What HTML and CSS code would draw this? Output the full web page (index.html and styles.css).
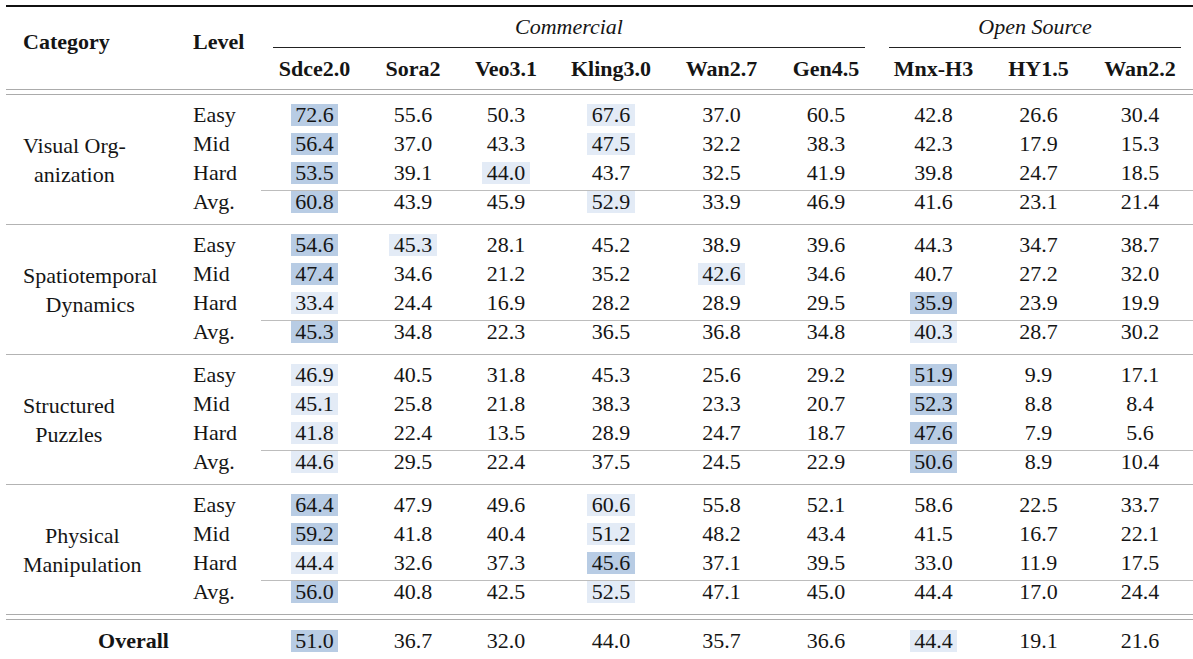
FILE: index.html
```html
<!DOCTYPE html>
<html lang="en">
<head>
<meta charset="utf-8">
<title>Results table</title>
<link rel="stylesheet" href="styles.css">
</head>
<body>
<div class="grid">
  <div class="row h1">
    <div class="hleft hb">Category</div>
    <div class="hleft hb">Level</div>
    <div class="grp g6">Commercial</div>
    <div class="grp g3">Open Source</div>
  </div>
  <div class="row h2">
    <div class="hb">Sdce2.0</div><div class="hb">Sora2</div><div class="hb">Veo3.1</div><div class="hb">Kling3.0</div><div class="hb">Wan2.7</div><div class="hb">Gen4.5</div>
    <div class="hb">Mnx-H3</div><div class="hb">HY1.5</div><div class="hb">Wan2.2</div>
  </div>

  <div class="row first">
    <div class="cat"><span class="cat-in">Visual Org-<br>anization</span></div>
    <div class="lvl">Easy</div>
    <div><span class="hl d">72.6</span></div><div>55.6</div><div>50.3</div><div><span class="hl l">67.6</span></div><div>37.0</div><div>60.5</div><div>42.8</div><div>26.6</div><div>30.4</div>
  </div>
  <div class="row">
    <div class="lvl">Mid</div>
    <div><span class="hl d">56.4</span></div><div>37.0</div><div>43.3</div><div><span class="hl l">47.5</span></div><div>32.2</div><div>38.3</div><div>42.3</div><div>17.9</div><div>15.3</div>
  </div>
  <div class="row hard">
    <div class="lvl">Hard</div>
    <div><span class="hl d">53.5</span></div><div>39.1</div><div><span class="hl l">44.0</span></div><div>43.7</div><div>32.5</div><div>41.9</div><div>39.8</div><div>24.7</div><div>18.5</div>
  </div>
  <div class="row avg">
    <div class="lvl">Avg.</div>
    <div><span class="hl d">60.8</span></div><div>43.9</div><div>45.9</div><div><span class="hl l">52.9</span></div><div>33.9</div><div>46.9</div><div>41.6</div><div>23.1</div><div>21.4</div>
  </div>

  <div class="row first sep">
    <div class="cat"><span class="cat-in">Spatiotemporal<br>Dynamics</span></div>
    <div class="lvl">Easy</div>
    <div><span class="hl d">54.6</span></div><div><span class="hl l">45.3</span></div><div>28.1</div><div>45.2</div><div>38.9</div><div>39.6</div><div>44.3</div><div>34.7</div><div>38.7</div>
  </div>
  <div class="row">
    <div class="lvl">Mid</div>
    <div><span class="hl d">47.4</span></div><div>34.6</div><div>21.2</div><div>35.2</div><div><span class="hl l">42.6</span></div><div>34.6</div><div>40.7</div><div>27.2</div><div>32.0</div>
  </div>
  <div class="row hard">
    <div class="lvl">Hard</div>
    <div><span class="hl l">33.4</span></div><div>24.4</div><div>16.9</div><div>28.2</div><div>28.9</div><div>29.5</div><div><span class="hl d">35.9</span></div><div>23.9</div><div>19.9</div>
  </div>
  <div class="row avg">
    <div class="lvl">Avg.</div>
    <div><span class="hl d">45.3</span></div><div>34.8</div><div>22.3</div><div>36.5</div><div>36.8</div><div>34.8</div><div><span class="hl l">40.3</span></div><div>28.7</div><div>30.2</div>
  </div>

  <div class="row first sep">
    <div class="cat"><span class="cat-in">Structured<br>Puzzles</span></div>
    <div class="lvl">Easy</div>
    <div><span class="hl l">46.9</span></div><div>40.5</div><div>31.8</div><div>45.3</div><div>25.6</div><div>29.2</div><div><span class="hl d">51.9</span></div><div>9.9</div><div>17.1</div>
  </div>
  <div class="row">
    <div class="lvl">Mid</div>
    <div><span class="hl l">45.1</span></div><div>25.8</div><div>21.8</div><div>38.3</div><div>23.3</div><div>20.7</div><div><span class="hl d">52.3</span></div><div>8.8</div><div>8.4</div>
  </div>
  <div class="row hard">
    <div class="lvl">Hard</div>
    <div><span class="hl l">41.8</span></div><div>22.4</div><div>13.5</div><div>28.9</div><div>24.7</div><div>18.7</div><div><span class="hl d">47.6</span></div><div>7.9</div><div>5.6</div>
  </div>
  <div class="row avg">
    <div class="lvl">Avg.</div>
    <div><span class="hl l">44.6</span></div><div>29.5</div><div>22.4</div><div>37.5</div><div>24.5</div><div>22.9</div><div><span class="hl d">50.6</span></div><div>8.9</div><div>10.4</div>
  </div>

  <div class="row first sep">
    <div class="cat"><span class="cat-in">Physical<br>Manipulation</span></div>
    <div class="lvl">Easy</div>
    <div><span class="hl d">64.4</span></div><div>47.9</div><div>49.6</div><div><span class="hl l">60.6</span></div><div>55.8</div><div>52.1</div><div>58.6</div><div>22.5</div><div>33.7</div>
  </div>
  <div class="row">
    <div class="lvl">Mid</div>
    <div><span class="hl d">59.2</span></div><div>41.8</div><div>40.4</div><div><span class="hl l">51.2</span></div><div>48.2</div><div>43.4</div><div>41.5</div><div>16.7</div><div>22.1</div>
  </div>
  <div class="row hard">
    <div class="lvl">Hard</div>
    <div><span class="hl l">44.4</span></div><div>32.6</div><div>37.3</div><div><span class="hl d">45.6</span></div><div>37.1</div><div>39.5</div><div>33.0</div><div>11.9</div><div>17.5</div>
  </div>
  <div class="row avg">
    <div class="lvl">Avg.</div>
    <div><span class="hl d">56.0</span></div><div>40.8</div><div>42.5</div><div><span class="hl l">52.5</span></div><div>47.1</div><div>45.0</div><div>44.4</div><div>17.0</div><div>24.4</div>
  </div>

  <div class="row overall">
    <div class="ov">Overall</div>
    <div><span class="hl d">51.0</span></div><div>36.7</div><div>32.0</div><div>44.0</div><div>35.7</div><div>36.6</div><div><span class="hl l">44.4</span></div><div>19.1</div><div>21.6</div>
  </div>
</div>
</body>
</html>
```

FILE: styles.css
```css
html, body {
  margin: 0;
  padding: 0;
  background: #ffffff;
}

body {
  font-family: "Liberation Serif", "Times New Roman", serif;
  font-size: 22px;
  color: #151515;
}

.grid {
  display: grid;
  grid-template-columns: 170px 85px 107px 90px 96px 114px 107px 102px 113px 97px 106px;
  width: 1187px;
  margin: 5px 0 0 6px;
  border-top: 2px solid #111111;
}

.row {
  display: contents;
}

.row > div {
  line-height: 29px;
  text-align: center;
  white-space: nowrap;
}

/* header */
.h1 > .hleft {
  grid-row: span 2;
  text-align: left;
  font-weight: bold;
  padding: 20px 0 0 17px;
}

.h1 > .grp {
  margin: 0 12px;
  height: 40px;
  line-height: 40px;
  border-bottom: 1px solid #222222;
  font-style: italic;
}

.h1 > .g6 { grid-column: span 6; }
.h1 > .g3 { grid-column: span 3; }

.h2 > div {
  font-weight: bold;
  line-height: 42px;
  padding-bottom: 4px;
}

.row > .hb {
  border-bottom: 1px solid #ababab;
  background: linear-gradient(#ababab, #ababab) no-repeat left bottom 4px / 100% 1px;
}

/* body */
.row > .cat {
  grid-row: span 4;
  display: flex;
  align-items: center;
  text-align: left;
  padding-left: 17px;
}

.cat-in {
  text-align: center;
  line-height: 29px;
}

.row > .lvl {
  text-align: left;
  padding-left: 17px;
}

.first > div {
  padding-top: 5px;
}

.first > .cat {
  padding-top: 0;
}

.sep > div {
  border-top: 1px solid #b3b3b3;
}

.hard > div {
  padding-bottom: 3px;
}

.avg > div {
  line-height: 22px;
  padding-bottom: 11px;
  border-top: 1px solid #bdbdbd;
}

.avg > .lvl {
  border-top-color: transparent;
}

.overall > div {
  border-top: 1px solid #ababab;
  border-bottom: 2px solid #111111;
  background: linear-gradient(#ababab, #ababab) no-repeat left 0 top 4px / 100% 1px;
  padding-top: 11px;
  padding-bottom: 6px;
}

.overall > .ov {
  grid-column: span 2;
  font-weight: bold;
}

/* highlights */
.hl {
  display: inline-block;
  padding: 0 4.5px;
  line-height: 22px;
}

.hl.d {
  background: #b8cce4;
}

.hl.l {
  background: #e3ebf6;
}
```
